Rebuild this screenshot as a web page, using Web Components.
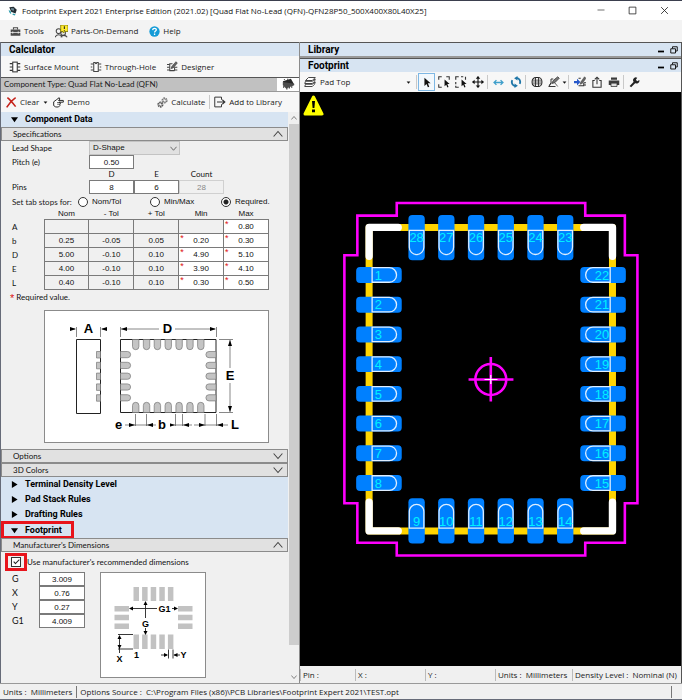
<!DOCTYPE html>
<html lang="en">
<head>
<meta charset="utf-8">
<title>Footprint Expert 2021</title>
<style>
html,body{margin:0;height:100%}
body{font:8px/12px "Open Sans","Noto Sans",sans-serif;color:#1a1a1a;background:#f0f0f0}
</style>
</head>
<body>
<app-window></app-window>
<script>
const define=(name,html,setup)=>{
  const t=document.createElement('template');t.innerHTML=html;
  customElements.define(name,class extends HTMLElement{
    connectedCallback(){
      if(this.shadowRoot)return;
      const r=this.attachShadow({mode:'open'});
      r.append(t.content.cloneNode(true));
      if(setup)setup(this,r);
    }
  });
};

/* ---------- icons ---------- */
const pins='<path d="M1 3.5h4M1 8h4M1 12.5h4M11 3.5h4M11 8h4M11 12.5h4" stroke="#333" stroke-width="1.6"/>';
const cursor='<path d="M5 1v12l3-3 2 5 2-1-2-5h4z" fill="#111"/>';
const corners='<path d="M1 5V1h4M11 1h4v4M1 11v4h4" fill="none" stroke="#333" stroke-width="1.4"/>';
const icons={
  app:'<path d="M2 2l7-1 5 5-2 6-7-3z" fill="#222c33"/><path d="M5 3l5 1-1 4-4-2z" fill="#6d8894"/><path d="M1 6l4 3v4l-3-3zM8 12l4 1-1 2-4-1z" fill="#33a0b0"/>',
  tools:'<path d="M1 5h14v4H1zM1 10h14v4H1z" fill="#4a4a4a"/><path d="M5 5V2.500h6V5" fill="none" stroke="#4a4a4a" stroke-width="1.500"/><path d="M4 8v3M12 8v3" stroke="#eee" stroke-width="1.500"/>',
  parts:'<g fill="none" stroke="#444" stroke-width="1.300"><circle cx="4.500" cy="7.500" r="3"/><circle cx="10" cy="10" r="2.800"/><path d="M0 15c2-4 7-4 9 0M7 15c2-3 6-3 8 0"/></g><path d="M7 0h9v8h-4l-2 2V8H7z" fill="#ffec2e" stroke="#7d7300"/><path d="M11.500 1.500v3.500M11.500 6v1" stroke="#222" stroke-width="1.300"/>',
  help:'<circle cx="8" cy="8" r="7.500" fill="#149bd7"/><path d="M5.300 6c.2-3.600 5.500-3.300 5.300-.3-.1 1.600-2.500 1.800-2.500 3.800M8.100 11v2" fill="none" stroke="#fff" stroke-width="1.900"/>',
  smd:pins+'<rect x="5" y="1.500" width="6" height="13" fill="#fff" stroke="#333" stroke-width="1.400"/>',
  tht:'<path d="M1 4h4M1 12h4M11 4h4M11 12h4M1 8h2M13 8h2" stroke="#444" stroke-width="1.600"/><path d="M5 2h2c0 2 2 2 2 0h2v12H5z" fill="#fff" stroke="#444" stroke-width="1.400"/>',
  designer:'<path d="M0 5h4M0 9h4M0 13h4M11 9h4M11 13h4" stroke="#444" stroke-width="1.600"/><path d="M11 14H4V4h4M11 9v5" fill="none" stroke="#444" stroke-width="1.500"/><path d="M6 11l1-3 6-7 2 2-6 7z" fill="#666" stroke="#222" stroke-width=".8"/>',
  chip:'<path d="M1 4l10-3 4 7-10 4z" fill="#292929"/><path d="M1 5v4l4 4 10-4V7" fill="#4d4d4d"/><path d="M2 10v2M6 12v2M9 11v2M12 10v2M3 1.500v1M7 1v1" stroke="#333" stroke-width="1.400"/>',
  clear:'<path d="M2 1c4 3 8 8 12 13M14 1C8 5 4 10 1 15" fill="none" stroke="#c5221a" stroke-width="2.300"/>',
  demo:'<path d="M1 7l4-3 4-3 1 2-2 2h7v2.500H9l2 1-1 2 0 2-2 2H4l-3-2z" fill="#fff" stroke="#222" stroke-width="1.400"/><path d="M6 8h4M6 10.500h4" stroke="#222"/>',
  calc:'<circle cx="5" cy="11" r="3" fill="none" stroke="#555" stroke-width="3" stroke-dasharray="2 .8"/><circle cx="11" cy="5" r="3" fill="none" stroke="#777" stroke-width="3" stroke-dasharray="2 .8"/>',
  add:'<path d="M10 5V1.500H1v13h9V11" fill="none" stroke="#333" stroke-width="1.300"/><path d="M4 8h10M11 5l3.500 3-3.500 3" fill="none" stroke="#333" stroke-width="1.400"/>',
  layers:'<g fill="#fff" stroke="#333" stroke-width="1.200"><path d="M1 14l1-3h9l4-3-1 3-3 3zM1 10l1-3h9l4-3-1 3-3 3z"/><path d="M2 6l4-4h9l-4 4z"/></g>',
  cursor:cursor,
  zoomin:corners+'<g transform="translate(5 4) scale(.75)">'+cursor+'</g>',
  zoomsel:'<path d="M1 5V1h4M8 1h3M1 8v3M1 13v2h4M14 1v4" fill="none" stroke="#333" stroke-width="1.500"/><g transform="translate(5 4) scale(.75)">'+cursor+'</g>',
  move:'<path d="M8 1v14M1 8h14" stroke="#111" stroke-width="1.500"/><path d="M8 0l3 3.500H5zM8 16l3-3.500H5zM0 8l3.500-3v6zM16 8l-3.500-3v6z" fill="#111"/>',
  flip:'<path d="M2 8h12M5 4.500L1.500 8 5 11.500M11 4.500L14.500 8 11 11.500" fill="none" stroke="#3f9fcb" stroke-width="1.900"/>',
  rotate:'<path d="M9 2.500a5.500 5.500 0 0 1 4 8M7 13.500a5.500 5.500 0 0 1-4-8" fill="none" stroke="#1f76a8" stroke-width="2.500"/><path d="M10 0v6L5.500 3zM6 16v-6l4.500 3z" fill="#1f76a8"/>',
  globe:'<rect x="1.500" y="2" width="13" height="12" rx="5" fill="none" stroke="#222" stroke-width="1.400"/><path d="M2 5.500h12M2 8h12M2 10.500h12" stroke="#444" stroke-width="1.100"/><path d="M6 2v12M10 2v12" stroke="#333" stroke-width="1.300"/>',
  measure:'<path d="M10 14H1l3-5V4h3M4 9l-2 4" fill="none" stroke="#333" stroke-width="1.300"/><path d="M5 10l2-4 6-5 2 2-6 6zM9 9l4 5" fill="#777" stroke="#333"/>',
  export:'<path d="M6 3h3M6 13h7V9M13 9h3M13 12h3" fill="none" stroke="#333" stroke-width="1.400"/><path d="M8 11l1-3 5-7 2 2-5 7z" fill="#666" stroke="#333" stroke-width=".6"/><path d="M0 6.500h4V3.500L8.500 8 4 12.500v-3H0z" fill="#2557c9"/>',
  share:'<path d="M5 6H2.500v9h11V6H11" fill="none" stroke="#333" stroke-width="1.400"/><path d="M8 11V2M5 4.500L8 1.500l3 3" fill="none" stroke="#333" stroke-width="1.400"/>',
  print:'<path d="M4 2h8v3H4zM1 6h14v6H1z" fill="#3c3c3c"/><path d="M4 9.500h8V14H4z" fill="#ddd" stroke="#333"/>',
  wrench:'<path d="M2 14l7-7" stroke="#222" stroke-width="3"/><path d="M8 8a4 4 0 0 1 4-7l-2 3 2 2 3-1.500A4 4 0 0 1 8 8z" fill="#222"/>',
  min:'<path d="M1 8h14" stroke="#222" stroke-width="1.300"/>',
  max:'<path d="M2 2h12v12H2z" fill="none" stroke="#222" stroke-width="1.400"/>',
  close:'<path d="M2 2l12 12M14 2L2 14" stroke="#222" stroke-width="1.500"/>',
  pmin:'<path d="M2 11h12" stroke="#000" stroke-width="3.500"/>',
  restore:'<path d="M5 5V1.500h9.500V10H11M1.500 5.500H11V14H1.500z" fill="none" stroke="#111" stroke-width="1.900"/>',
  caret:'<path d="M2 5h12l-6 7z" fill="#111"/>',
  down:'<path d="M0 3h16L8 14z" fill="#000"/>',
  right:'<path d="M2 0v16L15 8z" fill="#000"/>',
  chevup:'<path d="M1 12l7-8 7 8" fill="none" stroke="#444" stroke-width="1.700"/>',
  chevdown:'<path d="M1 4l7 8 7-8" fill="none" stroke="#444" stroke-width="1.700"/>'
};
define('ui-icon','<style>:host{display:inline-block;width:var(--size,12px);height:var(--size,12px);flex:none}svg{display:block;width:100%;height:100%}</style><svg viewBox="0 0 16 16" aria-hidden="true"></svg>',
 (h,r)=>{r.querySelector('svg').innerHTML=icons[h.getAttribute('name')];
  if(h.hasAttribute('size'))h.style.setProperty('--size',h.getAttribute('size')+'px')});

/* ---------- toolbar parts ---------- */
define('tool-button',`<style>
:host{display:block;flex:none}
button{display:flex;align-items:center;justify-content:center;gap:3px;width:100%;height:18px;padding:0;border:1px solid transparent;background:none;font:inherit;color:inherit;white-space:nowrap}
:host([square]){width:17px}
:host([square]) button{gap:0}
:host([active]) button{border-color:#7db7e4;background:#f2f8fd}
</style><button type="button"><ui-icon></ui-icon><slot></slot></button>`,(h,r)=>{
  const i=r.querySelector('ui-icon'),n=document.createElement('ui-icon');
  n.setAttribute('name',h.getAttribute('icon'));n.setAttribute('size',h.getAttribute('size')||12);i.replaceWith(n);
  if(h.hasAttribute('hint'))r.querySelector('button').setAttribute('aria-label',h.getAttribute('hint'));
});
define('tool-sep','<style>:host{display:block;flex:none;width:1px;height:14px;background:#c9c9c9}</style>');
define('panel-header',`<style>
:host{display:flex;align-items:center;gap:5px;height:13px;padding:0 3px 0 8px;background:#d7e4f2;border-top:1px solid #555;font:bold 10px/13px Roboto,sans-serif;color:#000}
h2{margin:0;font:inherit;flex:1}
button{display:flex;padding:0;border:0;background:none}
</style><h2><slot></slot></h2>`,(h,r)=>{
  if(h.hasAttribute('controls'))r.append(...[['pmin','Minimize'],['restore','Restore']].map(([n,l])=>{
    const b=document.createElement('button');b.setAttribute('aria-label',l);b.innerHTML='<ui-icon size="8" name="'+n+'"></ui-icon>';return b}));
});

/* ---------- window title and menu ---------- */
define('title-bar',`<style>
:host{display:flex;align-items:center;height:19px;padding:0 13px 0 8px;background:#fff;border-top:1px solid #3b3f4e;color:#111}
h1{margin:0 0 0 4px;font:inherit;flex:1;white-space:nowrap}
.b{display:flex;gap:23px}button{display:flex;padding:0;border:0;background:none}
</style><ui-icon name="app" size="10"></ui-icon><h1><slot></slot></h1>
<div class="b"><button aria-label="Minimize"><ui-icon name="min" size="8"></ui-icon></button><button aria-label="Maximize"><ui-icon name="max" size="9"></ui-icon></button><button aria-label="Close"><ui-icon name="close" size="9"></ui-icon></button></div>`);
define('menu-bar',`<style>:host{display:flex;align-items:center;gap:9px;height:22px;padding:0 9px;background:#f3f3f3}</style>
<tool-button icon="tools" size="11">Tools</tool-button><tool-button icon="parts" size="13">Parts-On-Demand</tool-button><tool-button icon="help" size="11">Help</tool-button>`);

/* ---------- collapsible headings ---------- */
define('tree-heading',`<style>
:host{display:block;background:#d7e4f2}
button{display:flex;align-items:center;gap:7px;width:100%;height:15px;padding:0 10px;border:0;background:none;font:bold 9px/15px Roboto,sans-serif;color:#000}
:host([marked]) button{width:73px;height:18px;margin:-1px 0;border:3px solid #e8141c;padding:0 7px}
</style><button type="button"><slot></slot></button>`,(h,r)=>{
  const open=h.hasAttribute('open'),b=r.querySelector('button');b.setAttribute('aria-expanded',open);
  b.insertAdjacentHTML('afterbegin','<ui-icon size="7" name="'+(open?'down':'right')+'"></ui-icon>');
});
define('fold-heading',`<style>
:host{display:block}
button{display:flex;align-items:center;justify-content:space-between;width:100%;height:14px;padding:0 4px 0 11px;background:#e1e1e1;border:1px solid #8b8b8b;font:8px/12px Lato,"Liberation Sans",sans-serif;color:#111}
</style><button type="button"><slot></slot></button>`,(h,r)=>{
  const open=h.hasAttribute('open'),b=r.querySelector('button');b.setAttribute('aria-expanded',open);
  b.insertAdjacentHTML('beforeend','<ui-icon size="10" name="'+(open?'chevup':'chevdown')+'"></ui-icon>');
});

/* ---------- specification form ---------- */
const fields=`
input[type=text]{box-sizing:border-box;display:block;width:100%;height:14px;margin:0;padding:0;border:1px solid #7a7a7a;border-radius:0;background:#fff;color:#111;text-align:center;font:8px/12px "Liberation Sans",sans-serif}
label,th,td,p{font:8px/12px Lato,"Liberation Sans",sans-serif;color:#111}`;
define('spec-form',`<style>
:host{display:block;padding:0 20px 0 11px}
${fields}
.grid{display:grid;grid-template-columns:77px repeat(3,45px);align-items:center}
.grid .lead{grid-column:2/5;width:91px;display:grid}
select{grid-area:1/1;appearance:none;box-sizing:border-box;height:14px;padding:0 3px;border:1px solid #c3c3c3;border-radius:0;background:#e1e1e1;font:8px/12px "Liberation Sans",sans-serif;color:#111}
.lead ui-icon{grid-area:1/1;justify-self:end;align-self:center;margin-right:3px;pointer-events:none}
.pitch{grid-column:2/3}.row{grid-column:1}.h{text-align:center;line-height:11px}.first{grid-column:2}
input:disabled{background:#f0f0f0;border-color:#d0d0d0;color:#888}
fieldset{display:grid;grid-template-columns:66px 72px 71px 1fr;align-items:center;height:15px;margin:0;padding:0;border:0;min-width:0}
fieldset label{display:flex;align-items:center;gap:4px;font:8px/12px "Liberation Sans",sans-serif;white-space:nowrap}
fieldset span{font:8px/12px Lato,"Liberation Sans",sans-serif;white-space:nowrap}
input[type=radio]{appearance:none;flex:none;width:10px;height:10px;margin:0;border:1px solid #333;border-radius:50%;background:#fff}
input[type=radio]:checked{background:radial-gradient(circle,#222 0 2px,#fff 3px)}
table{border-collapse:collapse;table-layout:fixed;width:257px}
.n{width:32px}th{font-weight:400;padding:0;height:10px;line-height:10px}thead th{font-family:"Liberation Sans",sans-serif}tbody th{text-align:left}
tbody td{box-sizing:border-box;height:14px;padding:0;border:1px solid #7a7a7a;position:relative}
tbody input[type=text]{height:13px;border:0;background:none}
td.req{background:#fff}td.req:before{content:"*";position:absolute;left:1px;top:-1px;color:#d11;font:9px/10px "Liberation Sans",sans-serif}
p{margin:1px 0 6px -2px}p b{color:#d11;font:11px/12px "Liberation Sans",sans-serif;vertical-align:-2px}
figure{margin:0 0 6px 32px;width:225px}
</style>
<div class="grid">
<label for="lead">Lead Shape</label><div class="lead"><select id="lead"><option>D-Shape</option></select><ui-icon name="chevdown" size="7"></ui-icon></div>
<label for="pitch" class="row">Pitch (e)</label><div class="pitch"><input type="text" id="pitch" value="0.50"></div>
<label class="h first" for="pd">D</label><label class="h" for="pe">E</label><label class="h" for="pc">Count</label>
<label class="row" for="pd">Pins</label><input type="text" id="pd" value="8"><input type="text" id="pe" value="6"><input type="text" id="pc" value="28" disabled>
</div>
<fieldset><span>Set tab stops for:</span><label><input type="radio" name="tab">Nom/Tol</label><label><input type="radio" name="tab">Min/Max</label><label><input type="radio" name="tab" checked>Required.</label></fieldset>
<table><thead><tr><th class="n"></th><th>Nom</th><th>- Tol</th><th>+ Tol</th><th>Min</th><th>Max</th></tr></thead><tbody></tbody></table>
<p><b>*</b> Required value.</p>
<figure><package-drawing></package-drawing></figure>`,(h,r)=>{
  r.querySelector('tbody').innerHTML=[['A','','','','','0.80'],['b','0.25','-0.05','0.05','0.20','0.30'],['D','5.00','-0.10','0.10','4.90','5.10'],['E','4.00','-0.10','0.10','3.90','4.10'],['L','0.40','-0.10','0.10','0.30','0.50']]
  .map(([n,...v])=>'<tr><th scope="row">'+n+'</th>'+v.map((x,i)=>'<td'+(i>2&&x?' class="req"':'')+'><input type="text" aria-label="'+n+' '+['Nom','- Tol','+ Tol','Min','Max'][i]+'" value="'+x+'"></td>').join('')+'</tr>').join('');
});
/* arrowhead with its tip at x,y pointing in direction d, length n */
const head=(x,y,d,n=6)=>{const a={l:[n,-2,n,2],r:[-n,-2,-n,2],u:[-2,n,2,n],d:[-2,-n,2,-n]}[d];return `<path d="M${x} ${y}L${x+a[0]} ${y+a[1]}L${x+a[2]} ${y+a[3]}z"/>`};
define('package-drawing',`<style>:host{display:block;background:#fff;border:1px solid #8b8b8b;box-sizing:border-box}svg{display:block;width:100%}text{font:bold 13px "Liberation Sans",sans-serif;text-anchor:middle}</style><svg viewBox="45 310 223 131" role="img" aria-label="Package dimensions"></svg>`,(h,r)=>{
  let s='<path d="M76.500 338.500h24v74h-24zM120.500 338.500h95.500v73h-95.500z" fill="none" stroke="#222"/><g fill="#c4c4c4" stroke="#777" stroke-width=".7">';
  for(let i=0;i<7;i++){const x=132.5+i*10.85;s+=`<path d="M${x} 338.500v7a3 3 0 0 0 6.400 0v-7zM${x} 411.500v-7a3 3 0 0 1 6.400 0v7z"/>`}
  for(let i=0;i<5;i++){const y=350.5+i*10.8;s+=`<path d="M120.500 ${y}h7a3 3 0 0 1 0 6.200h-7zM216 ${y}h-7a3 3 0 0 0 0 6.200h7zM100.500 ${y}h-4v6.500h4z"/>`}
  s+='</g><path d="M76.500 326v10M100.500 326v10M120.500 326v10M216.500 326v10M219 338.500h14M219 411.500h14M135.500 413v12M146.500 413v12M175.500 413v12M182.500 413v12M205 413v12M216.500 413v12M70 328h5M102 328h5M121 328h38M175 328h40M230 339v28M230 382v29M125 424h31M168 424h24M194 424h34" fill="none" stroke="#555" stroke-width=".7"/>';
  s+=head(76,328,'r')+head(101,328,'l')+head(121,328,'l')+head(216,328,'r')+head(230,339,'u')+head(230,411,'d')+head(135,424,'r')+head(147,424,'l')+head(175,424,'r')+head(183,424,'l')+head(205,424,'r')+head(217,424,'l');
  s+='<path d="M156 419h14v10h-14z" fill="#fff"/><text x="88.500" y="332">A</text><text x="167.500" y="332">D</text><text x="230" y="379">E</text><text x="118.500" y="428">e</text><text x="162" y="428">b</text><text x="235" y="428">L</text>';
  r.querySelector('svg').innerHTML=s;
});
define('maker-form',`<style>
:host{display:block;padding:1px 20px 5px 4px}
${fields}
.use{display:flex;align-items:center;height:18px}
.mark{display:flex;box-sizing:border-box;width:22px;height:18px;border:3px solid #e8141c;align-items:center;justify-content:center}
input[type=checkbox]{appearance:none;width:10px;height:10px;margin:0;border:1px solid #333;background:#fff;position:relative}
input[type=checkbox]:checked:after{content:"";position:absolute;left:3px;top:0;width:2px;height:5px;border:solid #222;border-width:0 1px 1px 0;transform:rotate(45deg)}
.body{display:flex;align-items:flex-start;padding:1px 0 0 7px;gap:15px}
.dims{display:grid;grid-template-columns:27px 46px;align-items:center}
.dims label{line-height:14px;font-size:9px}
.draw{width:106px}
</style>
<div class="use"><span class="mark"><input type="checkbox" id="use" checked></span><label for="use">Use manufacturer's recommended dimensions</label></div>
<div class="body"><div class="dims">
<label for="g">G</label><input type="text" id="g" value="3.009"><label for="x">X</label><input type="text" id="x" value="0.76"><label for="y">Y</label><input type="text" id="y" value="0.27"><label for="g1">G1</label><input type="text" id="g1" value="4.009">
</div><land-drawing class="draw"></land-drawing></div>`);
define('land-drawing',`<style>:host{display:block;background:#fff;border:1px solid #8b8b8b;box-sizing:border-box}svg{display:block;width:100%}text{font:bold 9px "Liberation Sans",sans-serif;text-anchor:middle}</style><svg viewBox="100 572 104 104" role="img" aria-label="Land pattern dimensions"></svg>`,(h,r)=>{
  let s='<g fill="#c2c2c2">';
  for(let i=0;i<5;i++){const x=132.5+i*8.6;s+=`<path d="M${x} 586h5.500v14h-5.500zM${x} 633.500h5.500v14.500h-5.500z"/>`}
  for(let i=0;i<3;i++){const y=605+i*8.7;s+=`<path d="M113.500 ${y}h14.500v5.500h-14.500zM177 ${y}h14.500v5.500H177z"/>`}
  s+='</g><path d="M129 607.500h27M171 607.500h5M144.500 601v16M144.500 627v6M117 633.500h15M117 648h15M118.500 635v17M160 654h6M173 654h6M167.500 648.500v9M172 648.500v9" fill="none" stroke="#222" stroke-width=".9"/>';
  s+=[[128,607.5,'l'],[177,607.5,'r'],[144.5,600,'u'],[144.5,634,'d'],[118.5,634,'u'],[118.5,648,'d'],[167,654,'r'],[172.5,654,'l']].map(a=>head(...a,4)).join('');
  s+='<text x="163.500" y="611">G1</text><text x="144.500" y="626">G</text><text x="118.500" y="661">X</text><text x="135.500" y="657">1</text><text x="182.500" y="657">Y</text>';
  r.querySelector('svg').innerHTML=s;
});
define('scroll-rail',`<style>
:host{display:flex;flex-direction:column;width:10px;background:#f0f0f0}
button{display:flex;align-items:center;justify-content:center;height:12px;padding:0;border:0;background:none}
i{flex:520;background:#cdcdcd}b{flex:26}
</style><button aria-label="Scroll up"><ui-icon name="chevup" size="6"></ui-icon></button><i></i><b></b><button aria-label="Scroll down"><ui-icon name="chevdown" size="6"></ui-icon></button>`);

define('calculator-panel',`<style>
:host{display:flex;flex-direction:column;background:#f0f0f0;border-left:1px solid #666b78;border-right:1px solid #8b8b8b}
.bar{display:flex;align-items:center;background:#f7f7f7}
.lib{height:21px;padding-left:7px;gap:9px;border-bottom:1px solid #555}
.type{display:flex;align-items:center;height:13px;background:#c1c1c1;padding-left:3px;border-bottom:1px solid #999;font:8px/13px Lato,"Liberation Sans",sans-serif}
.type span{flex:1}.type tool-button{align-self:stretch;width:22px;background:#fff;overflow:hidden;display:flex;align-items:center}
.act{height:20px;padding:0 16px 0 4px;gap:3px}
.act .gap{flex:1}
.act .demo{margin-left:1px}
.body{flex:1;display:flex}.main{flex:1;min-width:0;padding-right:1px}
.caret{padding:0;border:0;background:none;display:flex}
</style>
<panel-header>Calculator</panel-header>
<div class="bar lib"><tool-button icon="smd">Surface Mount</tool-button><tool-button icon="tht">Through-Hole</tool-button><tool-button icon="designer" size="11">Designer</tool-button></div>
<div class="type"><span>Component Type: Quad Flat No-Lead (QFN)</span><tool-button square icon="chip" size="13" hint="Component picture"></tool-button></div>
<div class="bar act"><tool-button icon="clear" size="11">Clear</tool-button><button class="caret" aria-label="Clear options"><ui-icon name="caret" size="5"></ui-icon></button><tool-button class="demo" icon="demo" size="11">Demo</tool-button><span class="gap"></span><tool-button icon="calc" size="11">Calculate</tool-button><tool-sep></tool-sep><tool-button icon="add">Add to Library</tool-button></div>
<div class="body"><div class="main">
<tree-heading open>Component Data</tree-heading>
<fold-heading open>Specifications</fold-heading>
<spec-form></spec-form>
<fold-heading>Options</fold-heading>
<fold-heading>3D Colors</fold-heading>
<tree-heading>Terminal Density Level</tree-heading>
<tree-heading>Pad Stack Rules</tree-heading>
<tree-heading>Drafting Rules</tree-heading>
<tree-heading open marked>Footprint</tree-heading>
<fold-heading open>Manufacturer's Dimensions</fold-heading>
<maker-form></maker-form>
</div><scroll-rail></scroll-rail></div>`);

/* ---------- footprint view ---------- */
define('board-view',`<style>
:host{display:block;position:relative;background:#000;overflow:hidden;min-height:0}
svg.board{display:block;position:absolute;inset:0;width:100%;height:100%}
text{font:13px "Liberation Sans",sans-serif;fill:#00f0ff}
.warn{position:absolute;left:3px;top:3px;width:21px;height:22px}
</style>
<svg class="board" viewBox="300 92 382 574" role="img" aria-label="QFN footprint"></svg>
<svg class="warn" viewBox="0 0 21 22" role="img" aria-label="Warning"><path d="M10.500 2L19 19H2z" fill="#ff0" stroke="#ff0" stroke-width="3" stroke-linejoin="round"/><path d="M9 6h3l-.6 7H9.600zM9 14.500h3v2.700H9z" fill="#000"/></svg>`,(h,r)=>{
  let s='<path d="M397 202.500H586V215.200H625.700V255H638.300V503.600H625.700V543.200H586V556H397V543.200H357.500V503.600H344.500V255H357.500V215.200H397z" fill="none" stroke="#f0f" stroke-width="2.600"/>';
  s+='<path d="M369.300 227H613.300V531.300H369.300z" fill="none" stroke="#ffd400" stroke-width="7" stroke-linejoin="round"/>';
  s+='<path d="M398.500 227H369.300V256M584.500 227H613.300V256M369.300 502.500V531.300H398.500M613.300 502.500V531.300H584.500" fill="none" stroke="#fff" stroke-width="7.400" stroke-linecap="round" stroke-linejoin="round"/>';
  const P='fill="#0080ff"',A='fill="none" stroke="#dfeeff" stroke-width="1.300"';
  for(let i=0;i<8;i++){const y=274.7+29.8*i;
    s+=`<rect x="356.300" y="${y-8}" width="45.700" height="16" rx="4" ${P}/><path d="M372.300 ${y-7.300}H389.500a7.300 7.300 0 0 1 0 14.600H372.300z" ${A}/><text x="375" y="${y+4.700}">${i+1}</text>`;
    s+=`<rect x="581" y="${y-8}" width="45.700" height="16" rx="4" ${P}/><path d="M611 ${y-7.300}H593.700a7.300 7.300 0 0 0 0 14.600H611z" ${A}/><text x="610" y="${y+4.700}" text-anchor="end">${22-i}</text>`}
  for(let i=0;i<6;i++){const x=416.900+29.8*i;
    s+=`<rect x="${x-8.200}" y="214.500" width="16.400" height="45.500" rx="4" ${P}/><path d="M${x-7.300} 230V246.900a7.300 7.300 0 0 0 14.600 0V230z" ${A}/><text x="${x}" y="241.500" text-anchor="middle">${28-i}</text>`;
    s+=`<rect x="${x-8.200}" y="498.500" width="16.400" height="45.500" rx="4" ${P}/><path d="M${x-7.300} 528.500V512a7.300 7.300 0 0 1 14.600 0V528.500z" ${A}/><text x="${x}" y="526" text-anchor="middle">${9+i}</text>`}
  s+='<g fill="none" stroke="#f0f" stroke-width="2.600"><circle cx="491.300" cy="379.500" r="15.500"/><path d="M469 379.500H514M491.300 357V401.500"/></g><path d="M485 379.500h13M491.300 375v9" stroke="#fff" stroke-width="1.200"/>';
  r.querySelector('.board').innerHTML=s;
});
define('view-toolbar',`<style>
:host{display:flex;align-items:center;height:20px;padding-left:1px;background:#f7f7f7}
.sel{display:grid;align-items:center;width:93px;margin:0 2px}
select{grid-area:1/1;appearance:none;border:0;background:none;padding:0;font:inherit;color:inherit}
.sel ui-icon{grid-area:1/1;justify-self:end;margin-right:2px;pointer-events:none}
.caret{padding:0;border:0;background:none;display:flex}
tool-sep{margin:0 1px}
tool-sep+tool-button:not([active]){margin-left:1px}
</style>
<tool-button square icon="layers" hint="Layers"></tool-button>
<div class="sel"><select aria-label="Layer"><option>Pad Top</option></select><ui-icon name="caret" size="5"></ui-icon></div>
<tool-sep></tool-sep>
<tool-button square active icon="cursor" size="11" hint="Select"></tool-button><tool-button square icon="zoomin" hint="Zoom to extents"></tool-button><tool-button square icon="zoomsel" hint="Zoom to selection"></tool-button><tool-button square icon="move" hint="Pan"></tool-button>
<tool-sep></tool-sep>
<tool-button square icon="flip" size="11" hint="Flip"></tool-button><tool-button square icon="rotate" hint="Rotate"></tool-button>
<tool-sep></tool-sep>
<tool-button square icon="globe" hint="3D view"></tool-button><tool-button square icon="measure" hint="Measure"></tool-button><button class="caret" aria-label="Measure options"><ui-icon name="caret" size="5"></ui-icon></button>
<tool-sep></tool-sep>
<tool-button square icon="export" hint="Export"></tool-button><tool-button square icon="share" hint="Share"></tool-button><tool-button square icon="print" hint="Print"></tool-button>
<tool-sep></tool-sep>
<tool-button square icon="wrench" size="11" hint="Settings"></tool-button>`);
define('status-cells',`<style>
:host{display:grid;grid-template-columns:55px 70px 70px 77px 1fr;height:17px;align-items:center;background:#f0f0f0}
span{border-left:1px solid #bbb;padding-left:2px;white-space:pre;line-height:12px}
</style><span>Pin :</span><span>X :</span><span>Y :</span><span>Units :  Millimeters</span><span>Density Level :  Nominal (N)</span>`);
define('footprint-panel',`<style>
:host{display:flex;flex-direction:column;min-width:0;border-left:1px solid #8b8b8b;border-right:1px solid #555;margin-left:-1px}
.lib{border-bottom:2px solid #999}
board-view{flex:1}
</style><panel-header class="lib" controls>Library</panel-header><panel-header controls>Footprint</panel-header><view-toolbar></view-toolbar><board-view></board-view><status-cells></status-cells>`);
define('app-status',`<style>
:host{display:flex;align-items:center;height:17px;padding:0 10px 0 3px;background:#f0f0f0;border-top:1px solid #999;box-sizing:border-box;border-bottom:1px solid #666b78;white-space:pre}
span+span{border-left:1px solid #777;margin-left:4px;padding-left:3px;flex:1;border-right:1px solid #777}
</style><span>Units :  Millimeters</span><span>Options Source :  C:\\Program Files (x86)\\PCB Libraries\\Footprint Expert 2021\\TEST.opt</span>`);
define('app-window',`<style>
:host{display:flex;flex-direction:column;min-height:100vh}
main{flex:1;display:grid;grid-template-columns:300px 1fr}
</style><title-bar>Footprint Expert 2021 Enterprise Edition (2021.02) [Quad Flat No-Lead (QFN)-QFN28P50_500X400X80L40X25]</title-bar><menu-bar></menu-bar>
<main><calculator-panel></calculator-panel><footprint-panel></footprint-panel></main><app-status></app-status>`);
</script>
</body>
</html>
